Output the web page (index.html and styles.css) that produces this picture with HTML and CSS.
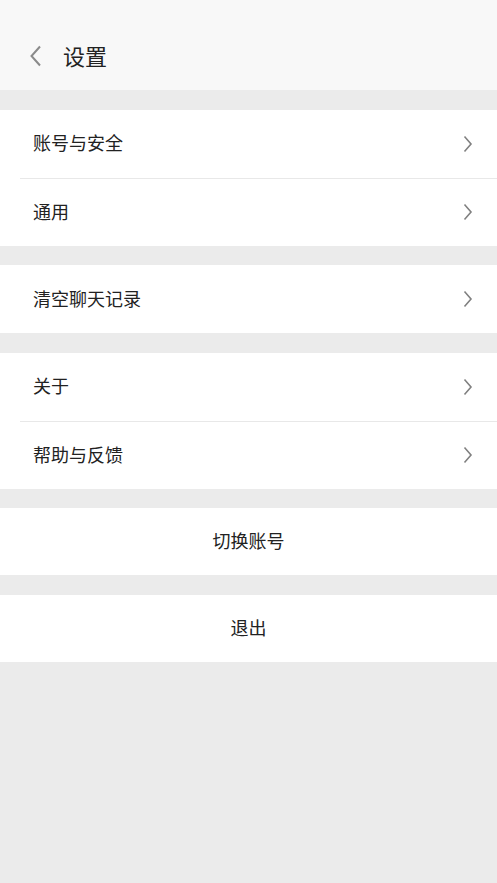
FILE: index.html
```html
<!DOCTYPE html>
<html lang="zh-CN">
<head>
<meta charset="utf-8">
<title>设置</title>
<link rel="stylesheet" href="styles.css">
</head>
<body>
<div class="page">
  <header class="header">
    <svg class="back" width="14" height="22" viewBox="0 0 14 22"><path d="M11 1.5 L2.5 11 L11 20.5" fill="none" stroke="#8a8a8a" stroke-width="2"/></svg>
    <h1 class="title">设置</h1>
  </header>
  <section class="group">
    <div class="row"><span class="label">账号与安全</span><svg class="arrow" width="10" height="18" viewBox="0 0 10 18"><path d="M1.5 1.5 L8 9 L1.5 16.5" fill="none" stroke="#808080" stroke-width="1.6"/></svg></div>
    <div class="row"><span class="label">通用</span><svg class="arrow" width="10" height="18" viewBox="0 0 10 18"><path d="M1.5 1.5 L8 9 L1.5 16.5" fill="none" stroke="#808080" stroke-width="1.6"/></svg></div>
  </section>
  <section class="group">
    <div class="row"><span class="label">清空聊天记录</span><svg class="arrow" width="10" height="18" viewBox="0 0 10 18"><path d="M1.5 1.5 L8 9 L1.5 16.5" fill="none" stroke="#808080" stroke-width="1.6"/></svg></div>
  </section>
  <section class="group">
    <div class="row"><span class="label">关于</span><svg class="arrow" width="10" height="18" viewBox="0 0 10 18"><path d="M1.5 1.5 L8 9 L1.5 16.5" fill="none" stroke="#808080" stroke-width="1.6"/></svg></div>
    <div class="row"><span class="label">帮助与反馈</span><svg class="arrow" width="10" height="18" viewBox="0 0 10 18"><path d="M1.5 1.5 L8 9 L1.5 16.5" fill="none" stroke="#808080" stroke-width="1.6"/></svg></div>
  </section>
  <section class="group">
    <div class="button"><span class="label">切换账号</span></div>
  </section>
  <section class="group">
    <div class="button"><span class="label">退出</span></div>
  </section>
</div>
</body>
</html>
```
FILE: styles.css
```css
html, body {
  margin: 0;
  padding: 0;
  background: #ebebeb;
  font-family: "Noto Sans CJK SC", "Noto Sans", sans-serif;
  color: #222;
}
.page {
  width: 497px;
  min-height: 883px;
  background: #ebebeb;
}
.header {
  height: 90px;
  background: #f8f8f8;
  display: flex;
  align-items: center;
  padding: 22px 0 0 0;
  box-sizing: border-box;
}
.back {
  margin-left: 29px;
  margin-right: 20px;
}
.title {
  margin: 0 0 2px 0;
  font-size: 22px;
  font-weight: 400;
  line-height: 1;
  color: #222;
}
.group {
  margin-top: 19.5px;
  background: #fff;
}
.row {
  height: 68px;
  display: flex;
  align-items: center;
  justify-content: space-between;
  margin-left: 20px;
  padding-left: 13px;
  padding-right: 24px;
  box-sizing: border-box;
  border-top: 1px solid #e8e8e8;
}
.row:first-child {
  border-top: none;
}
.label {
  font-size: 18px;
  line-height: 1;
  color: #222;
  padding-bottom: 3px;
}
.arrow {
  display: block;
}
.button {
  height: 67px;
  display: flex;
  align-items: center;
  justify-content: center;
}
```
